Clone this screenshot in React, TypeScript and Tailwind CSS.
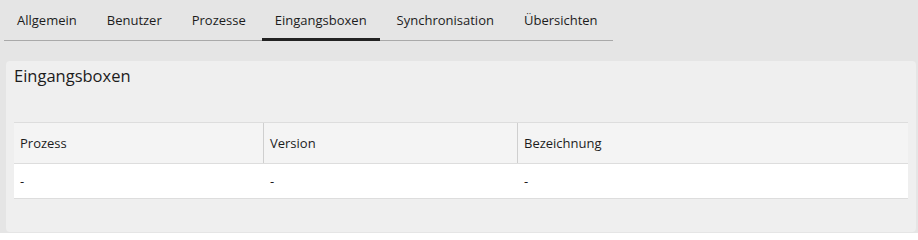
const tabs = [
  "Allgemein",
  "Benutzer",
  "Prozesse",
  "Eingangsboxen",
  "Synchronisation",
  "Übersichten",
];

const columns = ["Prozess", "Version", "Bezeichnung"];

const App = () => {
  return (
    <div
      className="h-[233px] w-[918px] overflow-hidden bg-[#e5e5e5] text-[#1c1c1c]"
      style={{ fontFamily: '"Open Sans", sans-serif' }}
    >
      <nav className="ml-[4px] flex w-[609px] gap-[4px] border-b border-[#a9a9a9]">
        {tabs.map((tab, i) => (
          <div
            key={tab}
            className={`-mb-px px-[13px] pb-[9px] pt-[11px] text-[13px] leading-[18px] border-b-[3px] ${
              i === 3 ? "-ml-px border-[#222]" : "border-transparent"
            }`}
          >
            {tab}
          </div>
        ))}
      </nav>

      <section className="ml-[6px] mt-[20px] h-[171px] w-[910px] rounded-[4px] bg-[#efefef] px-[8px] pt-[4px]">
        <h2 className="text-[16.5px] leading-[22px]">Eingangsboxen</h2>

        <div className="mt-[35px] text-[13px] leading-[18px]">
          <div className="grid grid-cols-[249px_254px_1fr] border-y border-[#dddddd] bg-[#f4f4f4]">
            {columns.map((col, i) => (
              <div
                key={col}
                className={`py-[11px] pl-[6px] ${
                  i > 0 ? "border-l border-[#cfcfcf]" : ""
                }`}
              >
                {col}
              </div>
            ))}
          </div>
          <div className="grid grid-cols-[249px_254px_1fr] border-b border-[#dddddd] bg-white">
            {columns.map((col, i) => (
              <div
                key={col}
                className={`py-[8px] ${i > 0 ? "pl-[7px]" : "pl-[6px]"}`}
              >
                -
              </div>
            ))}
          </div>
        </div>
      </section>
    </div>
  );
};

export default App;
